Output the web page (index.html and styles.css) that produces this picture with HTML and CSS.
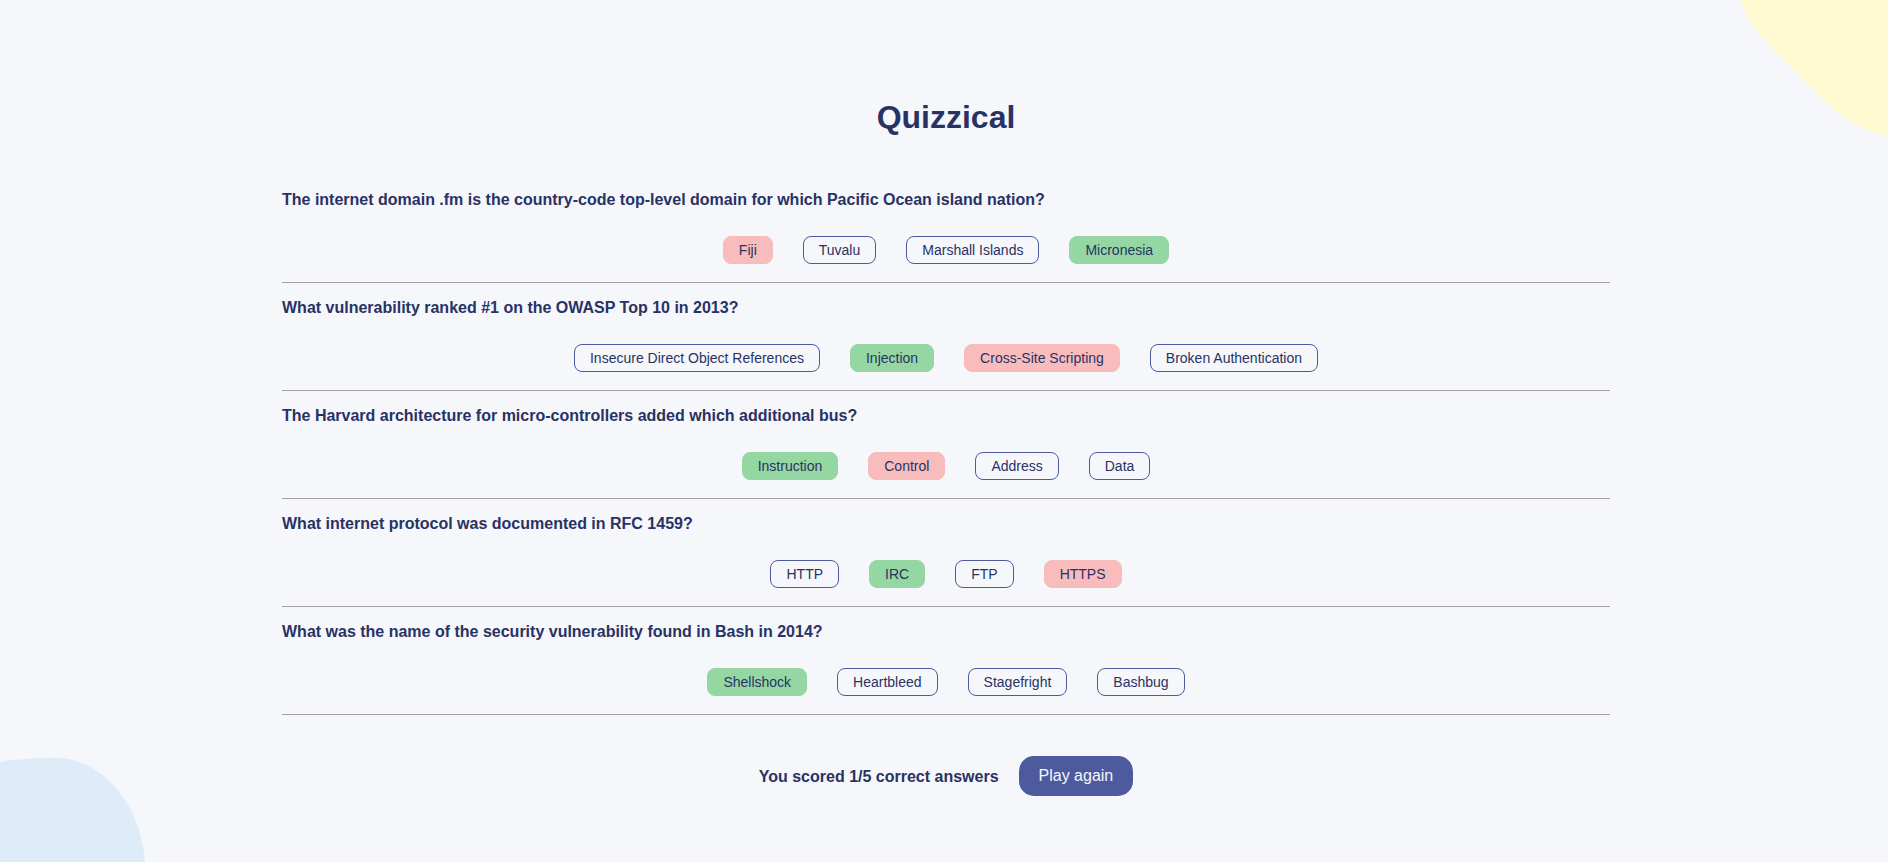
FILE: index.html
```html
<!DOCTYPE html>
<html lang="en">
<head>
<meta charset="utf-8">
<title>Quizzical</title>
<link rel="stylesheet" href="styles.css">
</head>
<body>
<svg class="blob blob-top" width="148" height="140" viewBox="1740 0 148 140" aria-hidden="true">
  <path d="M1741 0 C1746 22 1765 42 1790 66 C1815 90 1840 125 1888 137 L1888 0 Z" fill="#FFFAD1"/>
</svg>
<svg class="blob blob-bottom" width="150" height="110" viewBox="0 752 150 110" aria-hidden="true">
  <path d="M0 762 C20 759 40 757 60 758 C100 760 140 800 145 862 L0 862 Z" fill="#DEEBF8"/>
</svg>
<main class="quiz">
  <h1 class="title">Quizzical</h1>

  <section class="question">
    <h2 class="q-text">The internet domain .fm is the country-code top-level domain for which Pacific Ocean island nation?</h2>
    <div class="answers">
      <button class="answer wrong">Fiji</button>
      <button class="answer">Tuvalu</button>
      <button class="answer">Marshall Islands</button>
      <button class="answer correct">Micronesia</button>
    </div>
  </section>

  <section class="question">
    <h2 class="q-text">What vulnerability ranked #1 on the OWASP Top 10 in 2013?</h2>
    <div class="answers">
      <button class="answer">Insecure Direct Object References</button>
      <button class="answer correct">Injection</button>
      <button class="answer wrong">Cross-Site Scripting</button>
      <button class="answer">Broken Authentication</button>
    </div>
  </section>

  <section class="question">
    <h2 class="q-text">The Harvard architecture for micro-controllers added which additional bus?</h2>
    <div class="answers">
      <button class="answer correct">Instruction</button>
      <button class="answer wrong">Control</button>
      <button class="answer">Address</button>
      <button class="answer">Data</button>
    </div>
  </section>

  <section class="question">
    <h2 class="q-text">What internet protocol was documented in RFC 1459?</h2>
    <div class="answers">
      <button class="answer">HTTP</button>
      <button class="answer correct">IRC</button>
      <button class="answer">FTP</button>
      <button class="answer wrong">HTTPS</button>
    </div>
  </section>

  <section class="question">
    <h2 class="q-text">What was the name of the security vulnerability found in Bash in 2014?</h2>
    <div class="answers">
      <button class="answer correct">Shellshock</button>
      <button class="answer">Heartbleed</button>
      <button class="answer">Stagefright</button>
      <button class="answer">Bashbug</button>
    </div>
  </section>

  <footer class="result">
    <p class="score">You scored 1/5 correct answers</p>
    <button class="play">Play again</button>
  </footer>
</main>
</body>
</html>
```

FILE: styles.css
```css
* {
  box-sizing: border-box;
}

html, body {
  margin: 0;
  height: 100%;
}

body {
  background: #F5F7FB;
  font-family: "Liberation Sans", Arial, sans-serif;
  color: #293264;
  padding-left: 4px;
  overflow: hidden;
  position: relative;
}

.blob {
  position: absolute;
  display: block;
}

.blob-top {
  top: 0;
  right: 0;
}

.blob-bottom {
  bottom: 0;
  left: 0;
}

.quiz {
  position: relative;
  width: 1328px;
  margin: 0 auto;
  padding-top: 99px;
}

.title {
  margin: 0 0 40px;
  font-size: 32px;
  line-height: 36px;
  font-weight: 700;
  text-align: center;
}

.question {
  padding: 16px 0 18px;
  border-bottom: 1px solid #A2A2A2;
}

.q-text {
  margin: 0;
  font-size: 16px;
  line-height: 18px;
  font-weight: 700;
}

.answers {
  margin-top: 27px;
  display: flex;
  justify-content: center;
  gap: 30px;
}

.answer {
  font-family: "Liberation Sans", Arial, sans-serif;
  font-size: 14px;
  line-height: 16px;
  color: #293264;
  background: transparent;
  border: 1px solid #4D5B9E;
  border-radius: 8px;
  padding: 5px 15px;
  height: 28px;
}

.answer.correct {
  background: #94D7A2;
  border-color: #94D7A2;
}

.answer.wrong {
  background: #F8BCBC;
  border-color: #F8BCBC;
}

.result {
  margin-top: 41px;
  display: flex;
  justify-content: center;
  align-items: center;
  gap: 20px;
}

.score {
  margin: 0;
  font-size: 16px;
  font-weight: 700;
  line-height: 18px;
  padding-top: 1px;
}

.play {
  font-family: "Liberation Sans", Arial, sans-serif;
  font-size: 16px;
  line-height: 18px;
  color: #F5F7FB;
  background: #4D5B9E;
  border: none;
  border-radius: 15px;
  padding: 11px 20px;
  height: 40px;
}
```
